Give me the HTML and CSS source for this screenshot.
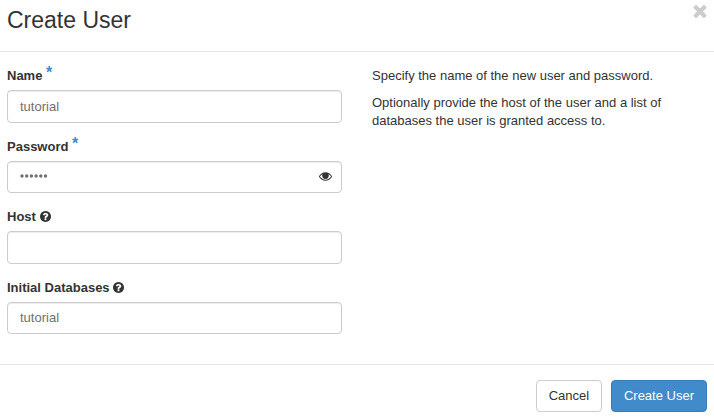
FILE: index.html
```html
<!DOCTYPE html>
<html lang="en">
<head>
<meta charset="utf-8">
<title>Create User</title>
<link rel="stylesheet" href="styles.css">
</head>
<body>
<svg class="defs" aria-hidden="true">
  <symbol id="help" viewBox="0 0 1536 1536">
    <path d="M896 1248v-192q0-14-9-23t-23-9H672q-14 0-23 9t-9 23v192q0 14 9 23t23 9h192q14 0 23-9t9-23zm256-672q0-88-55.500-163T958 297t-170-41q-243 0-371 213-15 24 8 42l132 100q7 6 19 6 16 0 25-12 53-68 86-92 34-24 86-24 48 0 85.500 26t37.500 59q0 38-20 61t-68 45q-63 28-115.500 86.500T640 892v36q0 14 9 23t23 9h192q14 0 23-9t9-23q0-19 21.500-49.500T972 829q32-18 49-28.500t46-35 44.500-48 28-60.500 12.500-81zm384 192q0 209-103 385.500T1153.500 1433 768 1536t-385.500-103T103 1153.500 0 768t103-385.500T382.500 103 768 0t385.500 103T1433 382.500 1536 768z"/>
  </symbol>
</svg>
<main class="dialog">
  <header class="dialog-header">
    <h1>Create User</h1>
    <button class="close" type="button" aria-label="Close">
      <svg viewBox="0 0 1188 1188"><path d="M1188 956q0 40-28 68l-136 136q-28 28-68 28t-68-28L594 866l-294 294q-28 28-68 28t-68-28L28 1024Q0 996 0 956t28-68l294-294L28 300Q0 272 0 232t28-68L164 28Q192 0 232 0t68 28l294 294L888 28q28-28 68-28t68 28l136 136q28 28 28 68t-28 68L866 594l294 294q28 28 28 68z"/></svg>
    </button>
  </header>
  <div class="dialog-body">
    <form class="fields">
      <div class="field">
        <label for="name">Name <span class="required">*</span></label>
        <input id="name" type="text" value="tutorial">
      </div>
      <div class="field">
        <label for="password">Password <span class="required">*</span></label>
        <div class="password-box">
          <svg class="mask" id="password" viewBox="0 0 28 4"><circle cx="2" cy="2" r="1.700"/><circle cx="6.700" cy="2" r="1.700"/><circle cx="11.400" cy="2" r="1.700"/><circle cx="16.100" cy="2" r="1.700"/><circle cx="20.800" cy="2" r="1.700"/><circle cx="25.500" cy="2" r="1.700"/></svg>
          <svg class="eye" viewBox="0 0 1792 1152"><path d="M1664 576q-152-236-381-353 61 104 61 225 0 185-131.500 316.500T896 896 579.500 764.500 448 448q0-121 61-225-229 117-381 353 133 205 333.500 326.500T896 1024t434.500-121.500T1664 576zM944 192q0-20-14-34t-34-14q-125 0-214.500 89.500T592 448q0 20 14 34t34 14 34-14 14-34q0-86 61-147t147-61q20 0 34-14t14-34zm848 384q0 34-20 69-140 230-376.500 368.500T896 1152t-499.500-139T20 645Q0 610 0 576t20-69q140-229 376.500-368T896 0t499.500 139T1772 507q20 35 20 69z"/><circle cx="896" cy="500" r="400"/></svg>
        </div>
      </div>
      <div class="field">
        <label for="host">Host <svg class="help"><use href="#help"/></svg></label>
        <input id="host" type="text">
      </div>
      <div class="field">
        <label for="databases">Initial Databases <svg class="help"><use href="#help"/></svg></label>
        <input id="databases" type="text" value="tutorial">
      </div>
    </form>
    <section class="description">
      <p>Specify the name of the new user and password.</p>
      <p>Optionally provide the host of the user and a list of databases the user is granted access to.</p>
    </section>
  </div>
  <footer class="dialog-footer">
    <button class="btn cancel" type="button">Cancel</button>
    <button class="btn primary" type="button">Create User</button>
  </footer>
</main>
</body>
</html>
```
FILE: styles.css
```css
* { box-sizing: border-box; }
body {
  margin: 0;
  background: #fff;
  color: #333;
  font: 13px/18px "Liberation Sans", Arial, sans-serif;
}
.defs { display: none; }
.dialog { height: 417px; display: flex; flex-direction: column; }
.dialog-header {
  height: 52px;
  flex: none;
  display: flex;
  justify-content: space-between;
  align-items: flex-start;
  padding: 4px 7px 0;
  border-bottom: 1px solid #e5e5e5;
}
h1 { margin: 0; font-size: 23px; font-weight: 400; line-height: 32px; }
.close { border: 0; padding: 0; margin-top: 1px; background: none; line-height: 0; }
.close svg { width: 14px; height: 13px; fill: #ccc; }
.dialog-body {
  flex: 1;
  display: grid;
  grid-template-columns: 335px 300px;
  column-gap: 30px;
  padding: 15px 7px 0;
}
.field { margin-bottom: 15px; }
label { display: block; height: 18px; margin-bottom: 5px; font-weight: 700; white-space: nowrap; }
.required { color: #428bca; font-size: 16px; line-height: 0; position: relative; top: -2px; }
.help { width: 11px; height: 11px; fill: #333; vertical-align: -1px; }
input, .password-box {
  display: block;
  width: 100%;
  height: 32.57px;
  padding: 6px 12px;
  border: 1px solid #ccc;
  border-radius: 4px;
  background: #fff;
  box-shadow: inset 0 1px 1px rgba(0, 0, 0, .075);
  color: #707070;
  font: inherit;
}
.password-box { display: flex; align-items: center; justify-content: space-between; padding-right: 9px; }
.mask { width: 28px; height: 4px; margin-top: -1px; fill: #707070; }
.eye { width: 13px; height: 9px; fill: #333; }
p { margin: 0 0 9px; }
.dialog-footer {
  height: 53px;
  flex: none;
  display: flex;
  justify-content: flex-end;
  align-items: flex-start;
  gap: 9px;
  padding: 15px 7px 0;
  border-top: 1px solid #e5e5e5;
}
.btn {
  height: 32px;
  padding: 0 12px;
  border: 1px solid #ccc;
  border-radius: 4px;
  background: #fff;
  color: #333;
  font: inherit;
}
.cancel { width: 66px; padding: 0; }
.primary { background: #428bca; border-color: #357ebd; color: #fff; }
```
